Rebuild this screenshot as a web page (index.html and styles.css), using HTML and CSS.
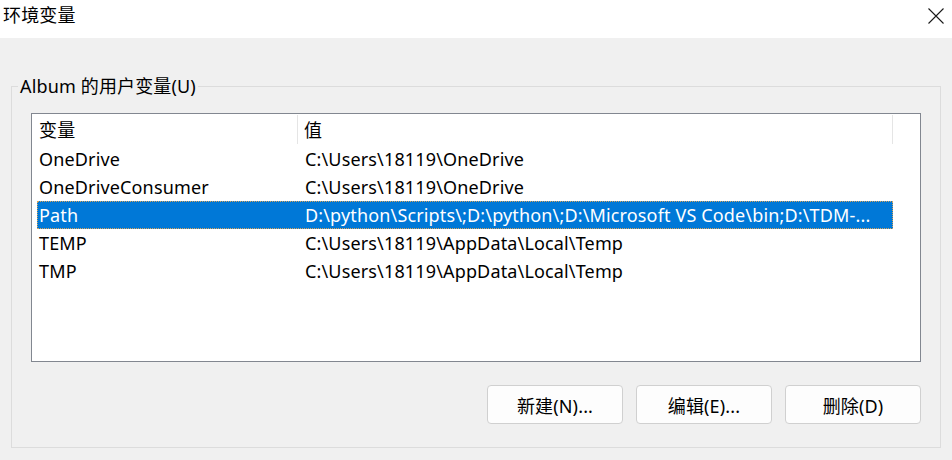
FILE: index.html
```html
<!DOCTYPE html>
<html lang="zh-CN">
<head>
<meta charset="utf-8">
<title>环境变量</title>
<link rel="stylesheet" href="styles.css">
</head>
<body>
<div class="window">
  <div class="titlebar">
    <span class="title">环境变量</span>
    <span class="close" aria-label="关闭">
      <svg width="16" height="16" viewBox="0 0 16 16"><path d="M0.5 0.5 L15.5 15.5 M15.5 0.5 L0.5 15.5" stroke="#1a1a1a" stroke-width="1.1" fill="none"/></svg>
    </span>
  </div>
  <div class="content">
    <fieldset class="group">
      <legend class="group-label">Album 的用户变量(U)</legend>
      <div class="list">
        <div class="list-head">
          <div class="hcell c1">变量</div>
          <div class="hcell c2">值</div>
        </div>
        <div class="row"><div class="cell c1">OneDrive</div><div class="cell c2">C:\Users\18119\OneDrive</div></div>
        <div class="row"><div class="cell c1">OneDriveConsumer</div><div class="cell c2">C:\Users\18119\OneDrive</div></div>
        <div class="row selected"><div class="cell c1">Path</div><div class="cell c2">D:\python\Scripts\;D:\python\;D:\Microsoft VS Code\bin;D:\TDM-...</div></div>
        <div class="row"><div class="cell c1">TEMP</div><div class="cell c2">C:\Users\18119\AppData\Local\Temp</div></div>
        <div class="row"><div class="cell c1">TMP</div><div class="cell c2">C:\Users\18119\AppData\Local\Temp</div></div>
      </div>
      <div class="buttons">
        <button class="btn">新建(N)...</button>
        <button class="btn">编辑(E)...</button>
        <button class="btn">删除(D)</button>
      </div>
    </fieldset>
  </div>
</div>
</body>
</html>
```
FILE: styles.css
```css
* { box-sizing: border-box; }
html, body { margin: 0; padding: 0; }
body {
  width: 952px;
  height: 460px;
  overflow: hidden;
  background: #f0f0f0;
  font-family: "Noto Sans", "Noto Sans CJK SC", sans-serif;
  font-size: 18px;
  letter-spacing: 0.15px;
  color: #000;
}
.titlebar {
  height: 38px;
  background: #fff;
  display: flex;
  justify-content: space-between;
  align-items: flex-start;
  padding: 3px 8px 0 3px;
}
.title { line-height: 24px; }
.close { display: block; margin-top: 5px; width: 16px; height: 16px; }
.close svg { display: block; }
.content { padding: 36px 11px 0 11px; }
.group {
  margin: 0;
  padding: 0 19px 23px 19px;
  border: 1px solid #dcdcdc;
}
.group-label {
  margin-left: -13px;
  padding: 0 2px;
  line-height: 24px;
}
.list {
  margin-top: 15px;
  height: 249px;
  border: 1px solid #828790;
  background: #fff;
  padding-left: 5px;
}
.list-head {
  display: flex;
  height: 31px;
  align-items: stretch;
}
.hcell {
  display: flex;
  align-items: center;
  line-height: 24px;
  padding-top: 1px;
}
.hcell.c1 { width: 261px; padding-left: 2px; border-right: 1px solid #e5e5e5; margin: 1px 0 1px 0; }
.hcell.c2 { width: 595px; padding-left: 6px; border-right: 1px solid #e5e5e5; margin: 1px 0 1px 0; }
.row {
  display: flex;
  width: 856px;
  height: 28px;
  align-items: center;
  white-space: nowrap;
}
.cell { line-height: 24px; overflow: hidden; }
.cell.c1 { width: 261px; padding-left: 2px; }
.cell.c2 { width: 595px; padding-left: 7px; }
.row.selected {
  background: #0078d7;
  color: #fff;
  outline: 1px dotted #d9a35a;
  outline-offset: -1px;
}
.buttons {
  display: flex;
  justify-content: flex-end;
  gap: 13px;
  margin-top: 23px;
}
.btn {
  width: 136px;
  height: 39px;
  background: #fdfdfd;
  border: 1px solid #d0d0d0;
  border-radius: 4px;
  font-family: "Noto Sans", "Noto Sans CJK SC", sans-serif;
  font-size: 18px;
  letter-spacing: 0.15px;
  color: #000;
  padding: 0;
}
```
